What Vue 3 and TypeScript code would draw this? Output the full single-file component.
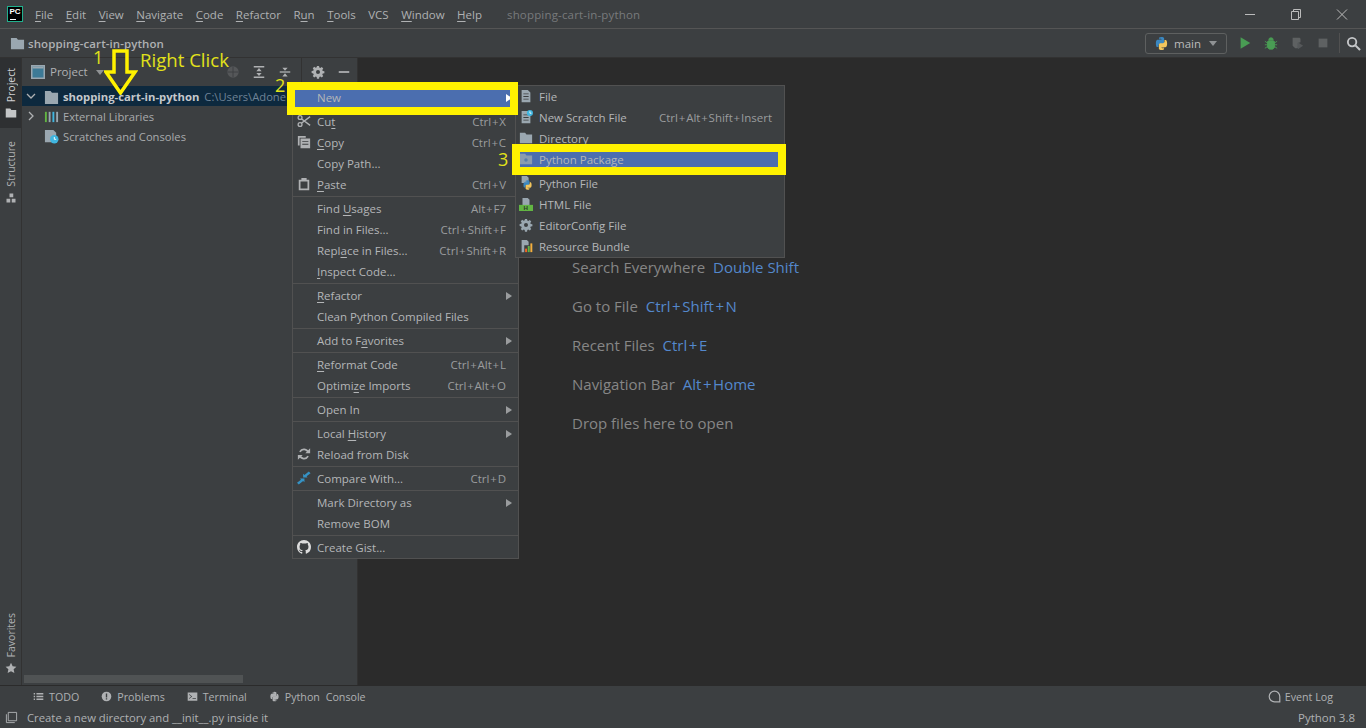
<script setup lang="ts">
interface MenuItem {
  label: string
  shortcut?: string
  arrow?: boolean
  icon?: string
  sep?: boolean
  hl?: boolean
}

const mainMenu = ['&File', '&Edit', '&View', '&Navigate', '&Code', '&Refactor', 'R&un', '&Tools', 'VCS', '&Window', '&Help']

const contextMenu: MenuItem[] = [
  { label: 'New', arrow: true, hl: true },
  { sep: true, label: '' },
  { label: 'Cu&t', shortcut: 'Ctrl+X', icon: 'cut' },
  { label: '&Copy', shortcut: 'Ctrl+C', icon: 'copy' },
  { label: 'Copy Path...', shortcut: '' },
  { label: '&Paste', shortcut: 'Ctrl+V', icon: 'paste' },
  { sep: true, label: '' },
  { label: 'Find &Usages', shortcut: 'Alt+F7' },
  { label: 'Find in Files...', shortcut: 'Ctrl+Shift+F' },
  { label: 'Repl&ace in Files...', shortcut: 'Ctrl+Shift+R' },
  { label: '&Inspect Code...' },
  { sep: true, label: '' },
  { label: '&Refactor', arrow: true },
  { label: 'Clean Python Compiled Files' },
  { sep: true, label: '' },
  { label: 'Add to F&avorites', arrow: true },
  { sep: true, label: '' },
  { label: '&Reformat Code', shortcut: 'Ctrl+Alt+L' },
  { label: 'Optimi&ze Imports', shortcut: 'Ctrl+Alt+O' },
  { sep: true, label: '' },
  { label: 'Open In', arrow: true },
  { sep: true, label: '' },
  { label: 'Local &History', arrow: true },
  { label: 'Reload from Disk', icon: 'reload' },
  { sep: true, label: '' },
  { label: 'Compare With...', shortcut: 'Ctrl+D', icon: 'compare' },
  { sep: true, label: '' },
  { label: 'Mark Directory as', arrow: true },
  { label: 'Remove BOM' },
  { sep: true, label: '' },
  { label: 'Create Gist...', icon: 'github' },
]

const subMenu: MenuItem[] = [
  { label: 'File', icon: 'file' },
  { label: 'New Scratch File', shortcut: 'Ctrl+Alt+Shift+Insert', icon: 'scratch' },
  { label: 'Directory', icon: 'folder' },
  { label: 'Python Package', icon: 'package', hl: true },
  { sep: true, label: '' },
  { label: 'Python File', icon: 'pyfile' },
  { label: 'HTML File', icon: 'html' },
  { label: 'EditorConfig File', icon: 'gear' },
  { label: 'Resource Bundle', icon: 'bundle' },
]

const hints = [
  { text: 'Search Everywhere', key: 'Double Shift' },
  { text: 'Go to File', key: 'Ctrl+Shift+N' },
  { text: 'Recent Files', key: 'Ctrl+E' },
  { text: 'Navigation Bar', key: 'Alt+Home' },
  { text: 'Drop files here to open', key: '' },
]

const toolButtons = [
  { label: 'TODO', icon: 'todo' },
  { label: 'Problems', icon: 'problems' },
  { label: 'Terminal', icon: 'terminal' },
  { label: 'Python Console', icon: 'console' },
]

const gearPath = 'M6.8 1h2.4l.3 1.9 1.2.5 1.6-1.1 1.7 1.7-1.1 1.6.5 1.2 1.9.3v2.4l-1.9.3-.5 1.2 1.1 1.6-1.7 1.7-1.6-1.1-1.2.5-.3 1.9H6.8l-.3-1.9-1.2-.5-1.6 1.1-1.7-1.7 1.1-1.6-.5-1.2L.7 9.2V6.8l1.9-.3.5-1.2L2 3.7 3.7 2l1.6 1.1 1.2-.5zM8 5.7A2.3 2.3 0 1 0 8 10.300A2.3 2.3 0 1 0 8 5.7z'
const filePath = 'M3 1h7l3 3v11H3zM5 5v1h6V5zM5 8v1h6V8zM5 11v1h6v-1z'
const pyBlue = 'M7.900 1C5.200 1 5.300 2.200 5.300 2.200V3.500H8V4H3.900C3.900 4 2 3.800 2 7.900S3.700 11.800 3.700 11.800H4.800V10.100S4.700 8.400 6.500 8.400H9.200S10.800 8.400 10.800 6.800V2.700S11 1 7.900 1ZM6.400 1.900A.5.5 0 1 1 6.400 2.900A.5.5 0 1 1 6.400 1.900Z'
const pyYellow = 'M8.100 15C10.800 15 10.700 13.800 10.700 13.800V12.500H8V12H12.100C12.100 12 14 12.200 14 8.100S12.300 4.200 12.300 4.200H11.200V5.900S11.300 7.600 9.500 7.600H6.800S5.200 7.600 5.200 9.200V13.300S5 15 8.100 15ZM9.600 14.100A.5.5 0 1 1 9.600 13.100A.5.5 0 1 1 9.600 14.100Z'

const icons: Record<string, string> = {
  cut: '<circle cx="3.500" cy="12" r="2.200" fill="none" stroke="#afb1b3" stroke-width="1.500"/><circle cx="3.500" cy="4" r="2.200" fill="none" stroke="#afb1b3" stroke-width="1.500"/><path d="M5 5.500 15 13M5 10.500 15 3" stroke="#afb1b3" stroke-width="1.600"/>',
  copy: '<path d="M1 1h9v2H3v9H1z" fill="#afb1b3"/><path d="M4 4h11v11H4zM6 7v1h7V7zM6 10v1h7v-1z" fill="#afb1b3" fill-rule="evenodd"/>',
  paste: '<path d="M5 1h6v2h3v12H2V3h3zM4 5v8h8V5z" fill="#afb1b3" fill-rule="evenodd"/>',
  reload: '<path d="M13 6.500A5.300 5.300 0 0 0 3.300 5.500M3 9.500A5.300 5.300 0 0 0 12.700 10.500" fill="none" stroke="#afb1b3" stroke-width="2"/><path d="M9.500 7H15V1.500zM6.500 9H1v5.500z" fill="#afb1b3"/>',
  compare: '<path d="M0 13.500 4.500 10 3.500 8.500H8.500V12.800L7 11.500 2 15.500z" fill="#3592c4"/><path d="M15.500 2.500 11 6 12 7.500H7V3.200L8.500 4.500 13.500.5z" fill="#3592c4"/>',
  github: '<path fill="#dcdcdc" d="M8 0C3.580 0 0 3.580 0 8c0 3.540 2.290 6.530 5.470 7.590.4.070.55-.17.55-.38 0-.19-.01-.82-.01-1.490-2.010.37-2.530-.49-2.690-.94-.09-.23-.48-.94-.82-1.130-.28-.15-.68-.52-.01-.53.63-.01 1.080.58 1.230.82.72 1.210 1.870.87 2.330.66.07-.52.28-.87.51-1.070-1.780-.2-3.640-.89-3.640-3.950 0-.87.31-1.590.82-2.150-.08-.2-.36-1.020.08-2.120 0 0 .67-.21 2.200.82.64-.18 1.320-.27 2-.27.68 0 1.360.09 2 .27 1.530-1.040 2.200-.82 2.200-.82.44 1.100.16 1.920.08 2.120.51.56.82 1.270.82 2.150 0 3.070-1.870 3.750-3.650 3.950.29.25.54.73.54 1.480 0 1.070-.01 1.930-.01 2.200 0 .21.15.46.55.38A8.013 8.013 0 0 0 16 8c0-4.420-3.580-8-8-8z"/>',
  file: `<path d="${filePath}" fill="#9aa7b0" fill-rule="evenodd"/>`,
  scratch: `<path d="${filePath}" fill="#9aa7b0" fill-rule="evenodd"/><circle cx="12.500" cy="3.500" r="3.500" fill="#40b6e0"/><path d="M12.500 1.500v2.200h1.700" stroke="#fff" fill="none"/>`,
  folder: '<path d="M1 2h6l1.500 2H15v10H1z" fill="#9aa7b0"/>',
  package: '<path d="M1 2h6l1.500 2H15v10H1z" fill="#9aa7b0" opacity=".8"/><circle cx="8" cy="9" r="2" fill="#5a7ca8"/>',
  pyfile: `<path d="M3 0h6l2 2v6H3z" fill="#9aa7b0"/><g transform="translate(3.500 4) scale(.78)"><path d="${pyBlue}" fill="#3a87c0"/><path d="${pyYellow}" fill="#f2c55c"/></g>`,
  html: '<path d="M4 1h6l2 2v6H4z" fill="#9aa7b0"/><rect x="0" y="9" width="16" height="7" fill="#62b543"/><text x="5" y="15" font-size="7" font-weight="700" fill="#2d3a2a" font-family="Liberation Sans">H</text>',
  gear: `<path d="${gearPath}" fill="#9aa7b0" fill-rule="evenodd"/>`,
  bundle: '<path d="M3 1h6l2 2v4H3zM3 7h3v8H3z" fill="#9aa7b0"/><rect x="7" y="11" width="2.200" height="4" fill="#f26522"/><rect x="10" y="8" width="2.200" height="7" fill="#62b543"/><rect x="13" y="5" width="2.200" height="10" fill="#f4af3d"/>',
  todo: '<path d="M1 3h2v2H1zM5 3h10v2H5zM1 7h2v2H1zM5 7h10v2H5zM1 11h2v2H1zM5 11h10v2H5z" fill="#afb1b3"/>',
  problems: '<circle cx="8" cy="8" r="7" fill="#afb1b3"/><path d="M7 3.500h2v6H7zM7 10.500h2v2H7z" fill="#3c3f41"/>',
  terminal: '<path d="M1 2h14v12H1zM3 4.500v1L6 8l-3 2.500v1L7.500 8zM8 10.500v1h5v-1z" fill="#afb1b3" fill-rule="evenodd"/>',
  console: `<path d="${pyBlue}" fill="#afb1b3"/><path d="${pyYellow}" fill="#afb1b3"/>`,
}

function parts(label: string) {
  const i = label.indexOf('&')
  if (i < 0) return { pre: label, key: '', post: '' }
  return { pre: label.slice(0, i), key: label[i + 1], post: label.slice(i + 2) }
}
</script>

<template>
  <div class="ide">
    <header class="title-bar">
      <div class="logo"><span>PC</span><i></i></div>
      <nav class="main-menu">
        <span v-for="m in mainMenu" :key="m">{{ parts(m).pre }}<u>{{ parts(m).key }}</u>{{ parts(m).post }}</span>
      </nav>
      <span class="window-title">shopping-cart-in-python</span>
      <div class="window-controls">
        <svg viewBox="0 0 46 14"><path d="M18 7.500h10" stroke="#bbb" /></svg>
        <svg viewBox="0 0 46 14"><path d="M18.500 4.500h7v8h-7zM20.500 4.500v-2h7v8h-2" fill="none" stroke="#bbb" /></svg>
        <svg viewBox="0 0 46 14"><path d="M18 2.500l10 10M28 2.500l-10 10" stroke="#bbb" /></svg>
      </div>
    </header>

    <div class="nav-bar">
      <svg class="nav-folder" viewBox="0 0 16 16"><path d="M1 2h6l1.500 2H15v10H1z" fill="#9aa7b0" /></svg>
      <b class="crumb">shopping-cart-in-python</b>
      <div class="nav-right">
        <div class="run-config">
          <svg class="py" viewBox="0 0 16 16">
            <path :d="pyBlue" fill="#3a87c0" />
            <path :d="pyYellow" fill="#f2c55c" />
          </svg>
          <span>main</span>
          <i class="caret"></i>
        </div>
        <button class="nav-btn"><svg viewBox="0 0 16 16"><path d="M3 1.500 14 8 3 14.500z" fill="#499c54" /></svg></button>
        <button class="nav-btn">
          <svg viewBox="0 0 16 16"><path d="M5 5.500h6l1 1V13l-2 2H6l-2-2V6.500zM5.500 4.500a2.500 2.500 0 0 1 5 0zM1 6l3 2M15 6l-3 2M1 10h3M15 10h-3M1 14l3-2M15 14l-3-2" fill="#499c54" stroke="#499c54" /></svg>
        </button>
        <button class="nav-btn">
          <svg viewBox="0 0 16 16"><path d="M3 2h8l1 1v4l-3 1v6H6l-3-3z" fill="#5e6162" /><path d="M9 7l6 4-6 4z" fill="#55585a" /></svg>
        </button>
        <button class="nav-btn"><svg viewBox="0 0 16 16"><rect x="3" y="3" width="10" height="10" fill="#5e6162" /></svg></button>
        <i class="nav-sep"></i>
        <button class="nav-btn search">
          <svg viewBox="0 0 16 16"><circle cx="6.500" cy="6.500" r="4.500" fill="none" stroke="#c4c6c8" stroke-width="2" /><path d="M10 10l5 5" stroke="#c4c6c8" stroke-width="2.200" /></svg>
        </button>
      </div>
    </div>

    <main class="workspace">
      <aside class="stripe">
        <div class="side-tab active">
          <span>Project</span>
          <svg viewBox="0 0 16 16"><path d="M1 2h6l1.500 2H15v10H1z" fill="#c4c6c8" /></svg>
        </div>
        <div class="side-tab structure">
          <span>Structure</span>
          <svg viewBox="0 0 16 16"><path d="M6 2h5v5H6zM2 9h5v5H2zM9 9h5v5H9z" fill="#afb1b3" /></svg>
        </div>
        <div class="side-tab favorites">
          <span>Favorites</span>
          <svg viewBox="0 0 16 16"><path d="M8 1l2.200 4.700 5 .6-3.700 3.500 1 5L8 12.300 3.500 14.800l1-5L.8 6.300l5-.6z" fill="#afb1b3" /></svg>
        </div>
      </aside>

      <section class="project-panel">
        <div class="panel-head">
          <svg class="panel-icon" viewBox="0 0 14 14"><rect x=".75" y=".75" width="12.500" height="12.500" fill="#3d7a96" stroke="#9aa7b0" stroke-width="1.500" /><rect x="1.500" y="1.500" width="11" height="2" fill="#9aa7b0" /></svg>
          <span class="panel-title">Project</span>
          <i class="caret"></i>
          <div class="panel-actions">
            <button><svg viewBox="0 0 16 16"><circle cx="8" cy="8" r="6.500" fill="#555759" /><path d="M8 2v12M2 8h12" stroke="#3c3f41" /></svg></button>
            <button><svg viewBox="0 0 16 16"><path d="M2 2h12M2 14h12" stroke="#afb1b3" stroke-width="1.500" /><path d="M8 3.500 11 7H5zM8 12.500 5 9h6z" fill="#afb1b3" /></svg></button>
            <button><svg viewBox="0 0 16 16"><path d="M2 8h12" stroke="#afb1b3" stroke-width="1.500" /><path d="M8 6.500 5 3h6zM8 9.500 11 13H5z" fill="#afb1b3" /></svg></button>
            <i class="head-sep"></i>
            <button><svg viewBox="0 0 16 16"><path :d="gearPath" fill="#afb1b3" fill-rule="evenodd" /></svg></button>
            <button><svg viewBox="0 0 16 16"><path d="M2 8h12" stroke="#afb1b3" stroke-width="2" /></svg></button>
          </div>
        </div>
        <div class="tree-row selected">
          <svg class="chev" viewBox="0 0 10 10"><path d="M1 3l4 4 4-4" fill="none" stroke="#afb1b3" stroke-width="1.300" /></svg>
          <svg class="tree-icon" viewBox="0 0 16 16"><path d="M1 2h6l1.500 2H15v12H1z" fill="#9aa7b0" /></svg>
          <b>shopping-cart-in-python</b><span class="path">C:\Users\Adone</span>
        </div>
        <div class="tree-row">
          <svg class="chev" viewBox="0 0 10 10"><path d="M3 1l4 4-4 4" fill="none" stroke="#afb1b3" stroke-width="1.300" /></svg>
          <svg class="tree-icon" viewBox="0 0 16 16"><path d="M1 3h2v11H1z" fill="#62b543" /><path d="M5 3h2v11H5z" fill="#9aa7b0" /><path d="M9 3h2v11H9z" fill="#40b6e0" /><path d="M13 3h2v11h-2z" fill="#9aa7b0" /></svg>
          <span>External Libraries</span>
        </div>
        <div class="tree-row">
          <i class="chev"></i>
          <svg class="tree-icon" viewBox="0 0 16 16"><path d="M1 1h9l3 3v5H8v5H1z" fill="#9aa7b0" /><circle cx="11" cy="11" r="4.500" fill="#40b6e0" /><path d="M11 8.500V11h2" stroke="#fff" fill="none" /></svg>
          <span>Scratches and Consoles</span>
        </div>
        <div class="scroll-track"><i></i></div>
      </section>

      <section class="editor">
        <p v-for="h in hints" :key="h.text">
          {{ h.text }}
          <span v-if="h.key" class="key">
            <template v-for="(k, i) in h.key.split('+')" :key="k"><i v-if="i" class="plus">+</i>{{ k }}</template>
          </span>
        </p>
      </section>
    </main>

    <footer class="tool-bar">
      <div v-for="t in toolButtons" :key="t.label" class="tool-btn">
        <svg viewBox="0 0 16 16" v-html="icons[t.icon]"></svg>
        <span>{{ t.label }}</span>
      </div>
      <div class="tool-btn event-log">
        <svg viewBox="0 0 16 16"><path d="M14.500 14.500H8A6.500 6.500 0 1 1 14.500 8z" fill="none" stroke="#afb1b3" stroke-width="1.500" /></svg>
        <span>Event Log</span>
      </div>
    </footer>
    <footer class="status-bar">
      <svg viewBox="0 0 14 14"><path d="M3.500 1.500h9v9h-9zM1.500 3.500v9h9" fill="none" stroke="#afb1b3" /></svg>
      <span>Create a new directory and __init__.py inside it</span>
      <span class="interpreter">Python 3.8</span>
    </footer>

    <div class="menu context-menu">
      <template v-for="(item, i) in contextMenu" :key="i">
        <div v-if="item.sep" class="menu-sep"></div>
        <div v-else class="menu-row" :class="{ hl: item.hl }">
          <svg v-if="item.icon" class="menu-icon" viewBox="0 0 16 16" v-html="icons[item.icon]"></svg>
          <span class="menu-label">{{ parts(item.label).pre }}<u>{{ parts(item.label).key }}</u>{{ parts(item.label).post }}</span>
          <span v-if="item.shortcut" class="shortcut">
            <template v-for="(k, j) in item.shortcut.split('+')" :key="k"><i v-if="j" class="plus">+</i>{{ k }}</template>
          </span>
          <i v-if="item.arrow" class="arrow"></i>
        </div>
      </template>
    </div>

    <div class="menu sub-menu">
      <template v-for="(item, i) in subMenu" :key="i">
        <div v-if="item.sep" class="menu-sep"></div>
        <div v-else class="menu-row" :class="{ hl: item.hl }">
          <svg v-if="item.icon" class="menu-icon" viewBox="0 0 16 16" v-html="icons[item.icon]"></svg>
          <span class="menu-label">{{ item.label }}</span>
          <span v-if="item.shortcut" class="shortcut">
            <template v-for="(k, j) in item.shortcut.split('+')" :key="k"><i v-if="j" class="plus">+</i>{{ k }}</template>
          </span>
        </div>
      </template>
    </div>

    <div class="mark box-new"></div>
    <div class="mark box-package"></div>
    <svg class="mark big-arrow" viewBox="0 0 34 46"><path d="M10 2H23V23H31L16.500 44 2 23H10Z" fill="none" stroke="#fff200" stroke-width="3.500" /></svg>
    <span class="mark note n1">1</span>
    <span class="mark note right-click">Right Click</span>
    <span class="mark note n2">2</span>
    <span class="mark note n3">3</span>
  </div>
</template>

<style scoped>
.ide {
  position: relative;
  width: 1366px;
  height: 728px;
  overflow: hidden;
  display: flex;
  flex-direction: column;
  background: #3c3f41;
  color: #afb1b3;
  font-family: "Open Sans", "Noto Sans", sans-serif;
  font-size: 11.5px;
}
svg { display: block; flex: none; }
button { all: unset; display: flex; align-items: center; justify-content: center; }
u { text-underline-offset: 2px; text-decoration-thickness: 1px; }
.plus { font-style: normal; margin: 0 .8px; }

.title-bar {
  height: 28px;
  flex: none;
  display: flex;
  align-items: center;
  border-bottom: 1px solid #555;
}
.logo {
  width: 16px;
  height: 16px;
  margin-left: 7px;
  background: #000;
  border: 1px solid #21b08d;
  box-sizing: border-box;
  position: relative;
  color: #fff;
  font: 700 8px/9px "Liberation Sans", sans-serif;
  text-align: center;
}
.logo i { position: absolute; left: 2px; bottom: 1px; width: 6px; height: 1px; background: #fff; }
.main-menu { display: flex; gap: 12.500px; margin-left: 12px; }
.window-title { margin-left: 25px; color: #787a7c; letter-spacing: .17px; }
.window-controls { margin-left: auto; display: flex; padding-right: 1px; }
.window-controls svg { width: 46px; height: 14px; }

.nav-bar {
  height: 28px;
  flex: none;
  display: flex;
  align-items: center;
  padding-left: 10px;
}
.nav-folder { width: 15px; height: 15px; }
.crumb { margin-left: 3px; font-weight: 600; color: #afb1b3; letter-spacing: .08px; }
.nav-right { margin-left: auto; display: flex; align-items: center; padding-right: 1px; }
.run-config {
  width: 82px;
  height: 21px;
  box-sizing: border-box;
  border: 1px solid #5e6060;
  border-radius: 3px;
  display: flex;
  align-items: center;
  padding-left: 8px;
  margin-right: 5px;
  color: #bbb;
  font-size: 11.5px;
}
.py { width: 15px; height: 15px; margin-right: 5px; }
.caret {
  display: block;
  width: 0;
  height: 0;
  border-left: 4px solid transparent;
  border-right: 4px solid transparent;
  border-top: 5px solid #8f9294;
}
.run-config .caret { margin-left: 8px; }
.nav-btn { width: 26px; height: 26px; }
.nav-btn svg { width: 14px; height: 14px; }
.nav-sep { display: block; width: 1px; height: 20px; background: #515151; margin: 0 1px 0 3px; }
.nav-btn.search { width: 24px; }
.nav-btn.search svg { width: 15px; height: 15px; }

.workspace {
  flex: 1;
  display: flex;
  min-height: 0;
  border-top: 1px solid #323232;
}
.stripe {
  width: 21px;
  flex: none;
  border-right: 1px solid #323232;
  display: flex;
  flex-direction: column;
  color: #afb1b3;
  height: 100%;
}
.side-tab {
  display: flex;
  flex-direction: column;
  align-items: center;
  gap: 5px;
  box-sizing: border-box;
  padding: 10px 0 0 1px;
  height: 70px;
  font-size: 10.5px;
}
.side-tab span { writing-mode: vertical-rl; transform: rotate(180deg); }
.side-tab svg { width: 12px; height: 12px; margin-left: -1px; }
.side-tab.active { background: #2e3032; color: #d0d2d4; margin-bottom: 7px; }
.side-tab.structure { padding-top: 6px; }
.side-tab.favorites { margin-top: auto; height: auto; padding: 0 0 11px 1px; }
.project-panel {
  width: 335px;
  flex: none;
  border-right: 1px solid #323232;
  display: flex;
  flex-direction: column;
}
.panel-head {
  height: 28px;
  flex: none;
  display: flex;
  align-items: center;
  padding-left: 9px;
}
.panel-icon { width: 14px; height: 14px; }
.panel-title { margin-left: 5px; margin-right: 8px; position: relative; top: -1px; }
.panel-actions { margin-left: auto; display: flex; align-items: center; }
.panel-actions button { width: 26px; height: 28px; }
.panel-actions svg { width: 14px; height: 14px; }
.head-sep { display: block; width: 1px; height: 28px; margin: 0 3px; background: #323232; }
.tree-row {
  height: 20px;
  display: flex;
  align-items: center;
  white-space: nowrap;
  overflow: hidden;
  padding-left: 4px;
  color: #a9abad;
  font-size: 11.2px;
}
.tree-row.selected { background: #0d293e; color: #c4c8cc; }
.tree-row b { font-weight: 700; font-size: 11.3px; }
.path { margin-left: 5px; color: #6f8396; }
.chev { display: block; width: 10px; height: 10px; margin-right: 8px; flex: none; }
.tree-icon { width: 15px; height: 15px; margin-right: 4px; }
.scroll-track { margin-top: auto; height: 9px; padding: 0 0 1px 2px; }
.scroll-track i { display: block; width: 219px; height: 8px; background: #505354; }

.editor {
  flex: 1;
  background: #2b2b2b;
  box-sizing: border-box;
  padding: 190px 0 0 214px;
  color: #868686;
  font-size: 15px;
}
.editor p { margin: 0; height: 39px; line-height: 39px; white-space: nowrap; }
.editor .key { margin-left: 4px; color: #5488cc; }
.editor .plus { margin: 0 1.6px; }

.tool-bar {
  height: 22px;
  flex: none;
  display: flex;
  align-items: center;
  border-top: 1px solid #2b2b2b;
  box-sizing: border-box;
  padding: 0 33px 0 33px;
  gap: 22px;
  font-size: 10.7px;
  word-spacing: 3px;
}
.tool-btn { display: flex; align-items: center; gap: 5px; }
.tool-btn svg { width: 11px; height: 11px; }
.event-log { margin-left: auto; gap: 4px; word-spacing: 0; }
.event-log svg { width: 13px; height: 13px; }
.status-bar {
  height: 21px;
  flex: none;
  display: flex;
  align-items: center;
  padding: 0 11px 0 5px;
  font-size: 11.3px;
}
.status-bar svg { width: 13px; height: 13px; margin-right: 9px; }
.interpreter { margin-left: auto; font-size: 11.5px; }

.menu {
  position: absolute;
  box-sizing: border-box;
  background: #3c3f41;
  border: 1px solid #515151;
  color: #b4b6b8;
  z-index: 2;
}
.context-menu { left: 292px; top: 86px; width: 227px; }
.sub-menu { left: 515px; top: 85px; width: 270px; }
.sub-menu .menu-row { padding-left: 23px; }
.menu-row {
  position: relative;
  height: 21px;
  display: flex;
  align-items: center;
  padding-left: 24px;
  padding-right: 12px;
  white-space: nowrap;
}
.menu-row.hl { background: #4b6eaf; }
.menu-sep { height: 1px; margin: 1px 0; background: #515151; }
.menu-icon { position: absolute; left: 4px; top: 3px; width: 14px; height: 14px; }
.sub-menu .menu-icon { left: 3px; }
.shortcut { margin-left: auto; color: #9a9c9e; }
.arrow {
  display: block;
  margin-left: auto;
  margin-right: -6px;
  width: 0;
  height: 0;
  border-top: 4px solid transparent;
  border-bottom: 4px solid transparent;
  border-left: 6px solid #9a9c9e;
}
.menu-row.hl .arrow { border-left-color: #fff; }
.mark { position: absolute; z-index: 3; }
.box-new {
  left: 287px;
  top: 82px;
  width: 231px;
  height: 33px;
  box-sizing: border-box;
  border: 8px solid #fff200;
}
.box-package {
  left: 512px;
  top: 144px;
  width: 274px;
  height: 31px;
  box-sizing: border-box;
  border: 8px solid #fff200;
}
.big-arrow { left: 104px; top: 49px; width: 34px; height: 46px; }
.note { color: #e2e21a; font-size: 18px; line-height: 20px; }
.n1 { left: 93px; top: 47px; }
.right-click { left: 140px; top: 50px; white-space: nowrap; font-size: 18.6px; }
.n2 { left: 275px; top: 75px; }
.n3 { left: 498px; top: 149px; }
</style>

<style>
html, body { margin: 0; background: #3c3f41; overflow: hidden; }
</style>
